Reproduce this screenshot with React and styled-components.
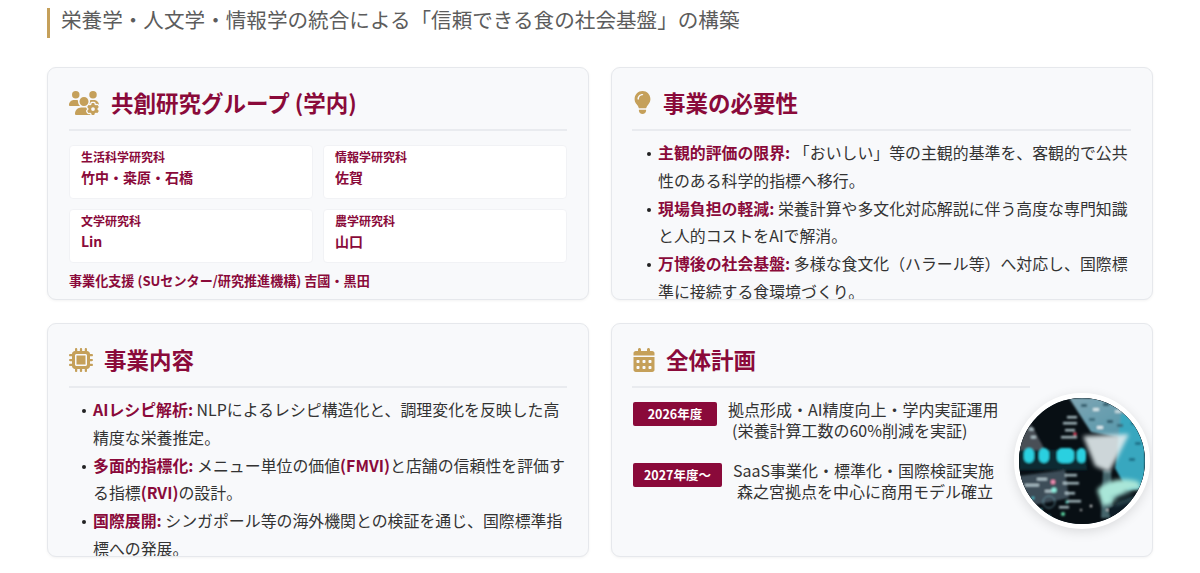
import React from "react";
import styled, { createGlobalStyle } from "styled-components";
import { FaUsersGear, FaLightbulb, FaMicrochip, FaCalendarDays } from "react-icons/fa6";

const maroon = "#8a0a3a";
const gold = "#c5a05a";

const GlobalStyle = createGlobalStyle`
  html, body {
    margin: 0;
    padding: 0;
    background: #fff;
    overflow: hidden;
  }
  body {
    font-family: "Noto Sans CJK JP", "Noto Sans", sans-serif;
    color: #333;
  }
`;

const Page = styled.div`
  width: 1200px;
  height: 573px;
  box-sizing: border-box;
  padding: 8px 47px 0;
`;

const Subtitle = styled.h1`
  margin: 0 0 29px;
  height: 30px;
  border-left: 3px solid ${gold};
  padding-left: 11px;
  font-size: 20.6px;
  line-height: 22px;
  font-weight: 400;
  color: #5c5c5c;
  white-space: nowrap;
`;

const Grid = styled.div`
  display: grid;
  grid-template-columns: 542px 542px;
  grid-template-rows: 233px 234px;
  column-gap: 22px;
  row-gap: 23px;
`;

const Card = styled.section`
  position: relative;
  box-sizing: border-box;
  background: #f8f9fb;
  border: 1px solid #e6e8ec;
  border-radius: 9px;
  box-shadow: 0 1px 3px rgba(0, 0, 0, 0.05);
  padding: ${(p) => p.$top || 17}px 21px 0 ${(p) => p.$left || 21}px;
  overflow: hidden;
`;

const CardHead = styled.h2`
  display: flex;
  align-items: center;
  gap: ${(p) => p.$gap || 12}px;
  margin: 0 0 ${(p) => p.$after || 14}px;
  width: ${(p) => p.$width || "auto"};
  height: 45px;
  border-bottom: 2px solid #e9ebef;
  font-size: 22.5px;
  font-weight: 700;
  line-height: 38px;
  color: ${maroon};
  svg {
    color: ${gold};
    font-size: ${(p) => p.$icon || 24}px;
    flex: none;
    margin-bottom: 8px;
    margin-left: ${(p) => p.$nudge || 0}px;
  }
  span {
    margin-bottom: 10px;
  }
`;

const Units = styled.div`
  display: grid;
  grid-template-columns: 244px 244px;
  column-gap: 10px;
  row-gap: 10px;
`;

const Unit = styled.div`
  box-sizing: border-box;
  height: 54px;
  background: #fff;
  border: 1px solid #f1f2f5;
  border-radius: 4px;
  padding: 2px 11px 0;
  color: ${maroon};
`;

const UnitLabel = styled.div`
  font-size: 12px;
  line-height: 18px;
  font-weight: 700;
`;

const UnitName = styled.div`
  font-size: 14px;
  line-height: 23px;
  font-weight: 700;
`;

const Support = styled.p`
  margin: 8px 0 0;
  font-size: 13.1px;
  line-height: 20px;
  font-weight: 700;
  color: ${maroon};
  white-space: nowrap;
`;

const List = styled.ul`
  list-style: none;
  margin: 0;
  padding: 0 0 0 ${(p) => p.$indent || 26}px;
  width: ${(p) => p.$width || 476}px;
`;

const Item = styled.li`
  position: relative;
  font-size: 15.9px;
  line-height: 27.8px;
  color: #333;
  &::before {
    content: "";
    position: absolute;
    left: -11px;
    top: 13px;
    width: 4px;
    height: 4px;
    border-radius: 50%;
    background: #222;
  }
  strong {
    font-weight: 700;
    color: ${maroon};
  }
`;

const Plan = styled.div`
  display: flex;
  flex-direction: column;
  gap: 21px;
  padding-left: 1px;
`;

const PlanRow = styled.div`
  display: flex;
  align-items: flex-start;
  gap: 11px;
`;

const Badge = styled.span`
  flex: none;
  width: ${(p) => p.$width}px;
  height: 24px;
  margin-top: 1px;
  border-radius: 2px;
  background: ${maroon};
  color: #fff;
  font-size: 12.5px;
  font-weight: 700;
  line-height: 24px;
  text-align: center;
`;

const PlanText = styled.div`
  margin-top: -2px;
  font-size: 16px;
  line-height: 21px;
  color: #333;
`;

const PlanLine = styled.div`
  padding-left: ${(p) => p.$indent || 0}px;
  white-space: nowrap;
`;

const Photo = styled.div`
  position: absolute;
  right: 2px;
  top: 69px;
  width: 136px;
  height: 136px;
  box-sizing: border-box;
  border: 5px solid #fff;
  border-radius: 50%;
  overflow: hidden;
  background: #0c1d26;
  box-shadow: 0 3px 12px rgba(0, 0, 0, 0.12);
  svg {
    display: block;
    width: 100%;
    height: 100%;
  }
`;

function LaptopPhoto() {
  const pills = [
    [5, 10],
    [20, 10],
    [38, 17],
    [58, 9],
  ];
  const dashes = [
    [48, 18, 10], [44, 24, 14], [46, 31, 10], [42, 38, 16], [46, 76, 12], [44, 84, 16],
    [46, 94, 10], [48, 102, 14], [10, 30, 5], [12, 38, 5], [18, 80, 10],
    [6, 86, 14], [26, 92, 8], [40, 108, 10],
  ];
  const lights = [
    [34, 84, 2.2, "#f48fb4"], [35, 92, 2.6, "#8ff0e0"], [44, 116, 2, "#5fe0a8"],
    [48, 104, 1.5, "#6fe8d8"], [72, 108, 1.2, "#ffffff"], [62, 112, 1, "#ffffff"],
    [56, 36, 1.8, "#e84060"], [22, 112, 1.4, "#4fc8d8"], [14, 100, 1.2, "#4fc8d8"],
    [88, 112, 1, "#ffffff"], [30, 118, 1.2, "#4fc8d8"],
  ];
  const specks = [
    [62, 6, "#2f5a6a"], [74, 10, "#d4e4e8"], [84, 5, "#2f5a6a"], [96, 12, "#c4d8de"],
    [70, 20, "#3a6a7a"], [88, 22, "#2f5a6a"], [106, 8, "#c4e4ea"], [78, 28, "#dce8ec"],
    [98, 26, "#3a6a7a"], [112, 24, "#1f7088"], [116, 44, "#1f7088"], [110, 60, "#1f7088"],
  ];
  return (
    <svg viewBox="0 0 126 126" preserveAspectRatio="xMidYMid slice">
      <defs>
        <filter id="soft" x="-20%" y="-20%" width="140%" height="140%">
          <feGaussianBlur stdDeviation="0.9" />
        </filter>
        <filter id="softer" x="-30%" y="-30%" width="160%" height="160%">
          <feGaussianBlur stdDeviation="2" />
        </filter>
        <linearGradient id="sheet" x1="0" y1="0" x2="1" y2="1">
          <stop offset="0" stopColor="#7fa6b4" />
          <stop offset="1" stopColor="#4a93a8" />
        </linearGradient>
      </defs>
      <rect width="126" height="126" fill="#080f14" />
      <g filter="url(#soft)">
        <polygon points="0,78 46,72 50,100 0,110" fill="#3c4d58" />
        <polygon points="0,42 12,26 26,52 0,60" fill="#4a4f57" />
        <polygon points="0,52 66,52 68,72 0,72" fill="#0c2a33" />
        <polygon points="50,0 126,0 126,44 100,40 72,34" fill="url(#sheet)" />
        <polygon points="102,16 126,18 126,90 108,92 96,70" fill="#38a7bf" />
        {specks.map(([x, y, c]) => (
          <rect key={`${x}-${y}`} x={x} y={y} width="6" height="3" fill={c} />
        ))}
        {pills.map(([x, w]) => (
          <rect key={x} x={x} y="50" width={w} height="15" rx="5" fill="#2cd0e0" />
        ))}
        <polygon points="84,72 92,72 94,120 82,120" fill="#7fb8c0" opacity="0.5" />
        <path d="M88 110 L126 94 L126 126 L92 126 Z" fill="#111f26" />
        {dashes.map(([x, y, w]) => (
          <rect key={`${x}-${y}`} x={x} y={y} width={w} height="2.4" fill="#c4dae0" opacity="0.85" />
        ))}
        {lights.map(([x, y, r, c]) => (
          <circle key={`${x}-${y}`} cx={x} cy={y} r={r} fill={c} />
        ))}
        <circle cx="30" cy="104" r="6" fill="none" stroke="#6d9aa8" strokeWidth="0.8" />
      </g>
      <g filter="url(#softer)">
        <polygon points="64,38 110,36 98,60 90,74 76,68" fill="#e2ecee" opacity="0.9" />
        <path d="M78 92 C86 82 106 78 120 84 L122 92 C110 90 100 96 92 106 L84 108 Z" fill="#a9e6d8" />
        <path d="M92 100 L112 94 M96 106 L116 100" stroke="#5f9aa0" strokeWidth="1.6" fill="none" />
      </g>
    </svg>
  );
}

export default function App() {
  return (
    <Page>
      <GlobalStyle />
      <Subtitle>栄養学・人文学・情報学の統合による「信頼できる食の社会基盤」の構築</Subtitle>
      <Grid>
        <Card $top={16}>
          <CardHead $icon={30} $after={14} $gap={12}>
            <FaUsersGear />
            <span>共創研究グループ (学内)</span>
          </CardHead>
          <Units>
            <Unit>
              <UnitLabel>生活科学研究科</UnitLabel>
              <UnitName>竹中・桒原・石橋</UnitName>
            </Unit>
            <Unit>
              <UnitLabel>情報学研究科</UnitLabel>
              <UnitName>佐賀</UnitName>
            </Unit>
            <Unit>
              <UnitLabel>文学研究科</UnitLabel>
              <UnitName>Lin</UnitName>
            </Unit>
            <Unit>
              <UnitLabel>農学研究科</UnitLabel>
              <UnitName>山口</UnitName>
            </Unit>
          </Units>
          <Support>事業化支援 (SUセンター/研究推進機構) 吉國・黒田</Support>
        </Card>

        <Card $top={16} $left={20}>
          <CardHead $icon={23} $gap={9} $after={8} $nudge={-1}>
            <FaLightbulb />
            <span>事業の必要性</span>
          </CardHead>
          <List>
            <Item><strong>主観的評価の限界:</strong> 「おいしい」等の主観的基準を、客観的で公共性のある科学的指標へ移行。</Item>
            <Item><strong>現場負担の軽減:</strong> 栄養計算や多文化対応解説に伴う高度な専門知識と人的コストをAIで解消。</Item>
            <Item><strong>万博後の社会基盤:</strong> 多様な食文化（ハラール等）へ対応し、国際標準に接続する食環境づくり。</Item>
          </List>
        </Card>

        <Card>
          <CardHead $icon={24} $gap={11} $after={8}>
            <FaMicrochip />
            <span>事業内容</span>
          </CardHead>
          <List $indent={24}>
            <Item><strong>AIレシピ解析:</strong> NLPによるレシピ構造化と、調理変化を反映した高精度な栄養推定。</Item>
            <Item><strong>多面的指標化:</strong> メニュー単位の価値<strong>(FMVI)</strong>と店舗の信頼性を評価する指標<strong>(RVI)</strong>の設計。</Item>
            <Item><strong>国際展開:</strong> シンガポール等の海外機関との検証を通じ、国際標準指標への発展。</Item>
          </List>
        </Card>

        <Card $left={20}>
          <CardHead $icon={24} $gap={10} $after={13} $width="398px">
            <FaCalendarDays />
            <span>全体計画</span>
          </CardHead>
          <Plan>
            <PlanRow>
              <Badge $width={84}>2026年度</Badge>
              <PlanText>
                <PlanLine>拠点形成・AI精度向上・学内実証運用</PlanLine>
                <PlanLine $indent={4}>(栄養計算工数の60%削減を実証)</PlanLine>
              </PlanText>
            </PlanRow>
            <PlanRow>
              <Badge $width={89}>2027年度〜</Badge>
              <PlanText>
                <PlanLine>SaaS事業化・標準化・国際検証実施</PlanLine>
                <PlanLine $indent={4}>森之宮拠点を中心に商用モデル確立</PlanLine>
              </PlanText>
            </PlanRow>
          </Plan>
          <Photo>
            <LaptopPhoto />
          </Photo>
        </Card>
      </Grid>
    </Page>
  );
}
